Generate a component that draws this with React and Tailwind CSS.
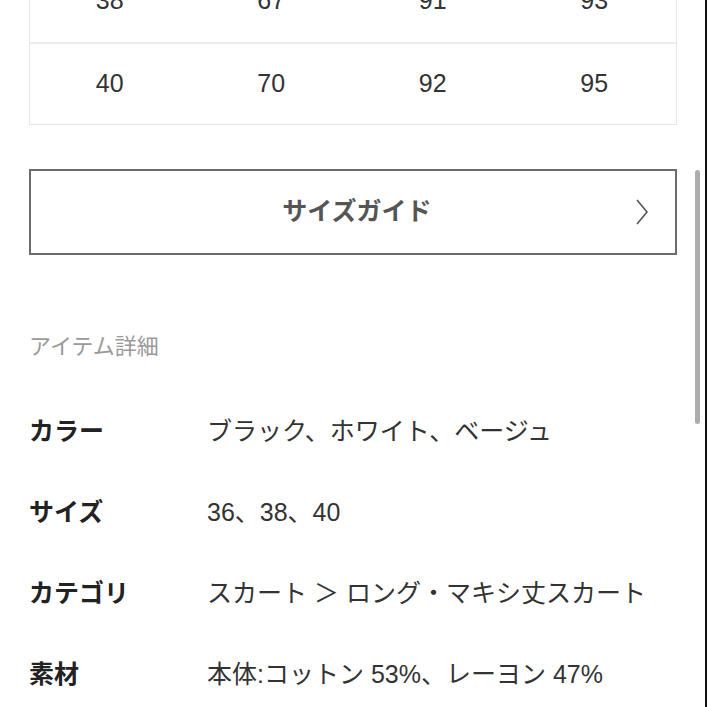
export default function App() {
  const rows = [
    ["38", "67", "91", "93"],
    ["40", "70", "92", "95"],
  ];
  const details = [
    ["カラー", "ブラック、ホワイト、ベージュ"],
    ["サイズ", "36、38、40"],
    ["カテゴリ", "スカート ＞ ロング・マキシ丈スカート"],
    ["素材", "本体:コットン 53%、レーヨン 47%"],
  ];
  return (
    <div
      className="relative w-[707px] h-[707px] overflow-hidden bg-white"
      style={{ fontFamily: '"Liberation Sans", "Noto Sans CJK JP", sans-serif' }}
    >
      <div className="px-[29px] pr-[30px]">
        <div className="mt-[-41px] border border-[#e6e6e6]">
          {rows.map((r, i) => (
            <div
              key={i}
              className={`grid grid-cols-4 h-[82px] items-center ${i > 0 ? "border-t-2 border-[#ececec]" : ""}`}
            >
              {r.map((c, j) => (
                <div key={j} className="text-center text-[25px] text-[#333] pr-[2px]">
                  {c}
                </div>
              ))}
            </div>
          ))}
        </div>

        <div className="mt-[44px] h-[86px] border-2 border-[#6b6b6b] flex items-center justify-center relative">
          <span className="text-[25px] font-bold text-[#555] ml-[8px]">サイズガイド</span>
          <svg
            className="absolute right-[26px] top-1/2 -translate-y-1/2"
            width="14"
            height="26"
            viewBox="0 0 14 26"
            fill="none"
            stroke="#555"
            strokeWidth="1.6"
          >
            <path d="M2 1 L12 13 L2 25" />
          </svg>
        </div>

        <div className="mt-[81px] text-[22px] text-[#9a9a9a] leading-none">アイテム詳細</div>

        <div className="mt-[33px] flex flex-col">
          {details.map(([k, v], i) => (
            <div key={i} className="flex items-center h-[81px]">
              <div className="w-[178px] text-[25px] font-bold text-[#222]">{k}</div>
              <div className="text-[25px] text-[#333]">{v}</div>
            </div>
          ))}
        </div>
      </div>

      <div className="absolute left-[695px] top-[170px] w-[5px] h-[254px] rounded-full bg-[#adadad]" />
      <div className="absolute right-0 top-0 w-[2px] h-full bg-[#111]" />
    </div>
  );
}
